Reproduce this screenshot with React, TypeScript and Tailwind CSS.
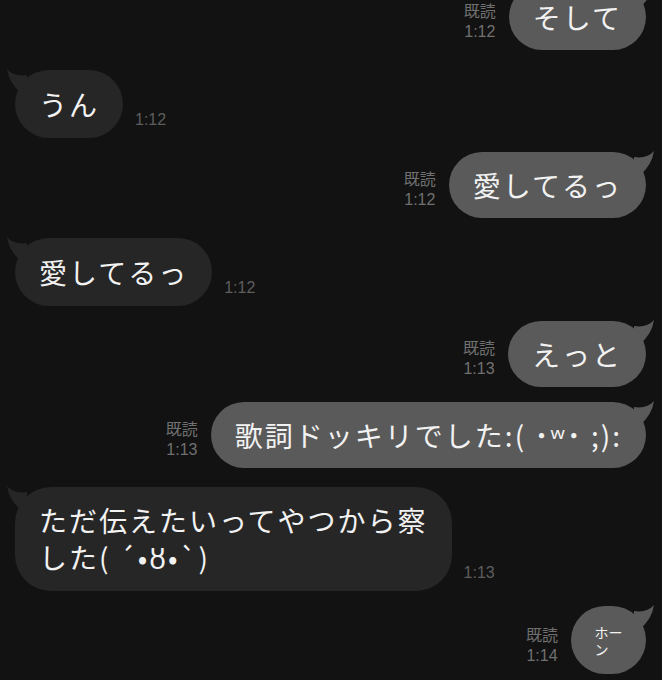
import React from 'react';

const font = { fontFamily: '"Noto Sans CJK JP", "Noto Sans", sans-serif' };
const num = { fontFamily: '"Liberation Sans", "Noto Sans CJK JP", sans-serif' };

function SentTail() {
  return (
    <svg className="absolute -right-[10px] -top-[1px]" width="22" height="24" viewBox="0 0 22 24">
      <path d="M0 6 Q13 8 20 0 Q18 14 6 24 L0 24 Z" fill="#5a5a5a" />
    </svg>
  );
}

function RecvTail() {
  return (
    <svg className="absolute -left-[10px] -top-[1px]" width="22" height="24" viewBox="0 0 22 24">
      <path d="M22 6 Q9 8 2 0 Q4 14 16 24 L22 24 Z" fill="#262626" />
    </svg>
  );
}

function Sent({ text, time, className = '', small = false }: { text: React.ReactNode; time: string; className?: string; small?: boolean }) {
  return (
    <div className={`flex justify-end items-end gap-[13px] pr-[16px] ${className}`}>
      <div className="flex flex-col items-center pb-[7px] text-[16px] leading-[22px] text-[#707070]">
        <span>既読</span>
        <span style={num}>{time}</span>
      </div>
      <div
        className={`relative flex items-center rounded-full bg-[#5a5a5a] text-[#f2f2f2] ${
          small ? 'h-[68px] w-[75px] justify-center text-[14px]' : 'h-[66px] px-[24px] text-[28px] tracking-[2px]'
        }`}
      >
        <SentTail />
        {small ? (
          <span className="relative flex flex-col gap-[3px] leading-none">
            <span>ホー</span>
            <span>ン</span>
          </span>
        ) : (
          <span className="relative">{text}</span>
        )}
      </div>
    </div>
  );
}

function Recv({ text, time, className = '', multi = false }: { text: React.ReactNode; time: string; className?: string; multi?: boolean }) {
  return (
    <div className={`flex items-end gap-[12px] pl-[15px] ${className}`}>
      <div
        className={`relative bg-[#262626] text-[#f2f2f2] text-[28px] tracking-[2px] ${
          multi ? 'rounded-[36px] px-[24px] py-[15px] leading-[37px]' : 'flex h-[68px] items-center rounded-full px-[24px]'
        }`}
      >
        <RecvTail />
        <span className="relative">{text}</span>
      </div>
      <span className="pb-[6px] text-[16px] text-[#5e5e5e]" style={num}>
        {time}
      </span>
    </div>
  );
}

export default function App() {
  return (
    <div className="h-[680px] w-[662px] overflow-hidden bg-[#121212]" style={font}>
      <div className="flex flex-col">
        <Sent text="そして" time="1:12" className="-mt-[16px]" />
        <Recv text="うん" time="1:12" className="mt-[20px]" />
        <Sent text="愛してるっ" time="1:12" className="mt-[14px]" />
        <Recv text="愛してるっ" time="1:12" className="mt-[20px]" />
        <Sent text="えっと" time="1:13" className="mt-[15px]" />
        <Sent text="歌詞ドッキリでした:( ˙ʷ˙ ;):" time="1:13" className="mt-[15px]" />
        <Recv
          multi
          text={
            <>
              ただ伝えたいってやつから察
              <br />
              した( ´•ȣ•`)
            </>
          }
          time="1:13"
          className="mt-[19px]"
        />
        <Sent small text="ホーン" time="1:14" className="mt-[15px]" />
      </div>
    </div>
  );
}
